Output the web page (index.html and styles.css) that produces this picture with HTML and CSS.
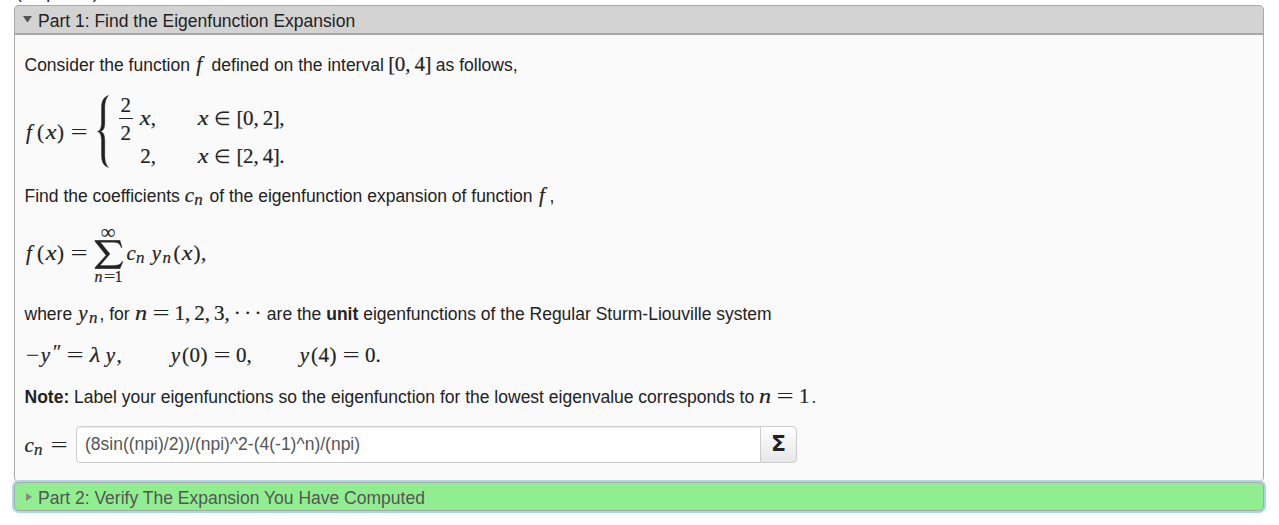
FILE: index.html
```
<!DOCTYPE html>
<html lang="en">
  <head>
    <meta charset="UTF-8">
    <title>Eigenfunction Expansion</title>
    <link rel="stylesheet" href="styles.css">
  </head>
  <body>
    <div class="points">(10 points)</div>

    <section class="part">
      <h2 class="part-title"><span class="arrow-down"></span>Part 1: Find the Eigenfunction Expansion</h2>
      <div class="part-body">
        <p class="line intro">Consider the function <span class="math"><i class="fn">f</i></span> defined on the interval <span class="math interval"><span class="sq">[</span>0,<span class="thin"></span>4<span class="sq">]</span></span> as follows,</p>

        <div class="line cases">
          <span class="math lhs"><i class="fn">f</i><span class="br">(</span><i class="wide">x</i><span class="br">)</span><span class="rel">=</span></span>
          <svg class="brace" viewBox="0 0 12 74"><path d="M11.500 .5C5 3 4.500 8 4.500 15V27C4.500 33 3.500 36 .3 37C3.500 38 4.500 41 4.500 47V59C4.500 66 5 71 11.500 73.500C8 69 7.800 65 7.800 59V47C7.800 41 7 38 3 37C7 36 7.800 33 7.800 27V15C7.800 9 8 5 11.500 .5Z" fill="#222" stroke="#222" stroke-width=".4"/></svg>
          <div class="case-grid math">
            <div class="case-value"><span class="frac"><span>2</span><span>2</span></span><i class="wide">x</i>,</div>
            <div><i class="wide">x</i><span class="elem">∈</span><span class="sq">[</span>0,<span class="thin"></span>2<span class="sq">]</span>,</div>
            <div class="case-value">2,</div>
            <div><i class="wide">x</i><span class="elem">∈</span><span class="sq">[</span>2,<span class="thin"></span>4<span class="sq">]</span>.</div>
          </div>
        </div>

        <p class="line find">Find the coefficients <span class="math"><i class="c">c</i><sub>n</sub></span> of the eigenfunction expansion of function <span class="math"><i class="fn">f</i></span>,</p>

        <div class="line series math">
          <span class="lhs"><i class="fn">f</i><span class="br">(</span><i class="wide">x</i><span class="br">)</span><span class="rel">=</span></span>
          <span class="sum">
            <span class="inf">∞</span>
            <svg class="sigma" viewBox="0 0 29 29"><path d="M1 .3H26L28 7.500H27C26 3.500 24 2.300 18 2.300H6.500L16 14L6 25.500H18C24 25.500 26.500 24.500 28 21.500H29L26 28.700H1V27.500L12 15.200L1 1.500Z" fill="#222" stroke="#222" stroke-width=".3"/></svg>
            <span class="from"><i>n</i><span class="eq">=</span>1</span>
          </span>
          <span class="terms"><i class="c">c</i><sub>n</sub><span class="thin"></span><i>y</i><sub>n</sub><span class="br">(</span><i class="wide">x</i><span class="br">)</span>,</span>
        </div>

        <p class="line where">where <span class="math"><i>y</i><sub>n</sub></span>, for <span class="math"><i class="wide">n</i><span class="rel">=</span>1,<span class="thin"></span>2,<span class="thin"></span>3,<span class="thin"></span><span class="dots">···</span></span> are the <b>unit</b> eigenfunctions of the Regular Sturm-Liouville system</p>

        <div class="line system math">
          <span class="eq1"><span class="minus">−</span><i>y</i><sup>″</sup><span class="rel">=</span><i class="wide">λ</i><span class="thin"></span><i>y</i>,</span>
          <span class="eq2"><i>y</i><span class="br">(</span>0<span class="br">)</span><span class="rel">=</span>0,</span>
          <span><i>y</i><span class="br">(</span>4<span class="br">)</span><span class="rel">=</span>0.</span>
        </div>

        <p class="line note"><b>Note:</b> Label your eigenfunctions so the eigenfunction for the lowest eigenvalue corresponds to <span class="math one"><i class="wide">n</i><span class="rel">=</span>1</span>.</p>

        <div class="answer">
          <span class="math answer-label"><i class="c">c</i><sub>n</sub><span class="rel">=</span></span>
          <input type="text" class="answer-input" value="(8sin((npi)/2))/(npi)^2-(4(-1)^n)/(npi)">
          <button type="button" class="answer-button">Σ</button>
        </div>
      </div>
    </section>

    <section class="part-closed">
      <h2 class="part-title"><span class="arrow-right"></span>Part 2: Verify The Expansion You Have Computed</h2>
    </section>
  </body>
</html>
```
FILE: styles.css
```
* {
  box-sizing: border-box;
}

body {
  margin: 0;
  height: 525px;
  overflow: hidden;
  background: #fff;
  color: #222;
  font: 17.5px/20px "Liberation Sans", Arial, sans-serif;
}

.points {
  display: flex;
  align-items: flex-end;
  height: 5px;
  padding: 0 0 3px 16px;
}

/* panels */
.part {
  margin: 0 15px 0 14px;
  height: 477px;
}

.part-title {
  display: flex;
  align-items: center;
  height: 30px;
  margin: 0;
  padding: 2px 0 0 8px;
  font-size: 17.5px;
  font-weight: normal;
  border: 1px solid #a9a9a9;
}

.part .part-title {
  background: #d3d3d3;
  border-bottom-width: 2px;
  border-radius: 5px 5px 0 0;
}

.part-body {
  height: 447px;
  padding: 19px 10px 0 9.5px;
  background: #fafafa;
  border: 1px solid #a9a9a9;
  border-width: 0 1px;
  border-radius: 0 0 5px 5px;
}

.part-closed {
  margin: 0 15px 0 14px;
}

.part-closed .part-title {
  height: 29px;
  background: #90ee90;
  color: #555;
  border-radius: 5px;
  box-shadow: 0 0 0 2px #add8e6;
}

.arrow-down {
  width: 9px;
  margin: 0 6px 4px 0;
  border: 4.5px solid transparent;
  border-top: 6px solid #555;
  border-bottom: 0;
}

.arrow-right {
  width: 6px;
  margin: 0 6px 1px 3px;
  border: 4.5px solid transparent;
  border-left: 6px solid #888;
  border-right: 0;
}

/* text lines */
.line {
  margin: 0;
  white-space: nowrap;
}

.intro { height: 41px; }
.find { height: 38px; }
.where { height: 42px; }
.note { height: 40px; }

/* math */
.math {
  display: inline-block;
  font-family: "Liberation Serif", "Times New Roman", serif;
  font-size: 21px;
  line-height: 20px;
  -webkit-text-stroke: .2px #222;
}

.math i,
.math sub,
.math sup {
  display: inline-block;
  width: 12px;
  line-height: 0;
  text-align: center;
}

.math sub,
.math sup {
  width: 10.5px;
  font-size: 17px;
  font-style: italic;
}

.math sub {
  vertical-align: -3px;
  text-indent: -2px;
}

.math sup {
  width: 9px;
  font-size: 20px;
  vertical-align: 3px;
}

.math .c { width: 9.5px; }
.math .fn { text-indent: -3px; }

.math .wide {
  transform: scaleX(1.15);
}

.thin {
  display: inline-block;
  width: 4px;
}

.br,
.sq {
  display: inline-block;
  width: 8px;
  text-align: center;
}

.sq {
  width: 6px;
  text-indent: -.5px;
}

.rel {
  display: inline-block;
  width: 28px;
  text-align: center;
  transform: scaleX(1.45);
  -webkit-text-stroke: 0;
}

.elem {
  display: inline-block;
  width: 28.5px;
  text-align: center;
  font-size: 19px;
  -webkit-text-stroke: 0;
}

.minus {
  display: inline-block;
  width: 15px;
  text-align: center;
  transform: scaleX(1.15);
  -webkit-text-stroke: 0;
}

.dots {
  margin-right: -3px;
  letter-spacing: 3.4px;
}

.one { margin-right: 2px; }

.cases {
  display: flex;
  align-items: center;
  height: 76px;
  margin-bottom: 14px;
}

.lhs { width: 69px; }

.cases .lhs {
  width: 72px;
  padding-bottom: 2px;
}

.brace {
  width: 12px;
  height: 73px;
  margin-bottom: 3px;
}

.math.case-grid {
  display: grid;
  grid-template-columns: 47.5px 100px;
  grid-template-rows: 46px 30px;
  align-items: center;
  column-gap: 40.5px;
}

.case-value {
  display: flex;
  align-items: center;
  justify-content: flex-end;
}

.frac {
  display: flex;
  flex-direction: column;
  margin-right: 6px;
  text-align: center;
}

.frac span {
  width: 14px;
  height: 23px;
  line-height: 29px;
}

.frac span:first-child {
  height: 24px;
  line-height: 20px;
  border-bottom: 1px solid #222;
}

.math.series {
  display: flex;
  align-items: center;
  height: 60px;
  margin-bottom: 20px;
}

.sum {
  display: flex;
  flex-direction: column;
  align-items: center;
  width: 29px;
  margin-right: 4px;
  padding-top: 2px;
  font-size: 16px;
  line-height: 16px;
}

.inf {
  font-size: 21px;
  -webkit-text-stroke: 0;
}

.sum i { width: 10px; }

.from .eq {
  display: inline-block;
  width: 11px;
  text-align: center;
  transform: scaleX(1.3);
  -webkit-text-stroke: 0;
}

.sigma {
  width: 29px;
  height: 29px;
}

.math.system {
  display: flex;
  height: 41px;
}

.eq1 { width: 145px; }
.eq2 { width: 129px; }

/* answer row */
.answer {
  display: flex;
  align-items: center;
  height: 37px;
}

.answer-label { width: 51.5px; }

.answer-input {
  width: 685px;
  height: 37px;
  padding: 0 8px 1px;
  border: 1px solid #ccc;
  border-radius: 4px 0 0 4px;
  background: #fff;
  box-shadow: inset 0 1px 1px rgba(0, 0, 0, .075);
  color: #555;
  font: 17.5px "Liberation Sans", Arial, sans-serif;
}

.answer-button {
  width: 37px;
  height: 37px;
  margin-left: -1px;
  padding: 0 0 3px;
  border: 1px solid #ccc;
  border-radius: 0 4px 4px 0;
  background: linear-gradient(#fff, #e6e6e6);
  color: #222;
  font: bold 22px "DejaVu Sans", sans-serif;
}
```
